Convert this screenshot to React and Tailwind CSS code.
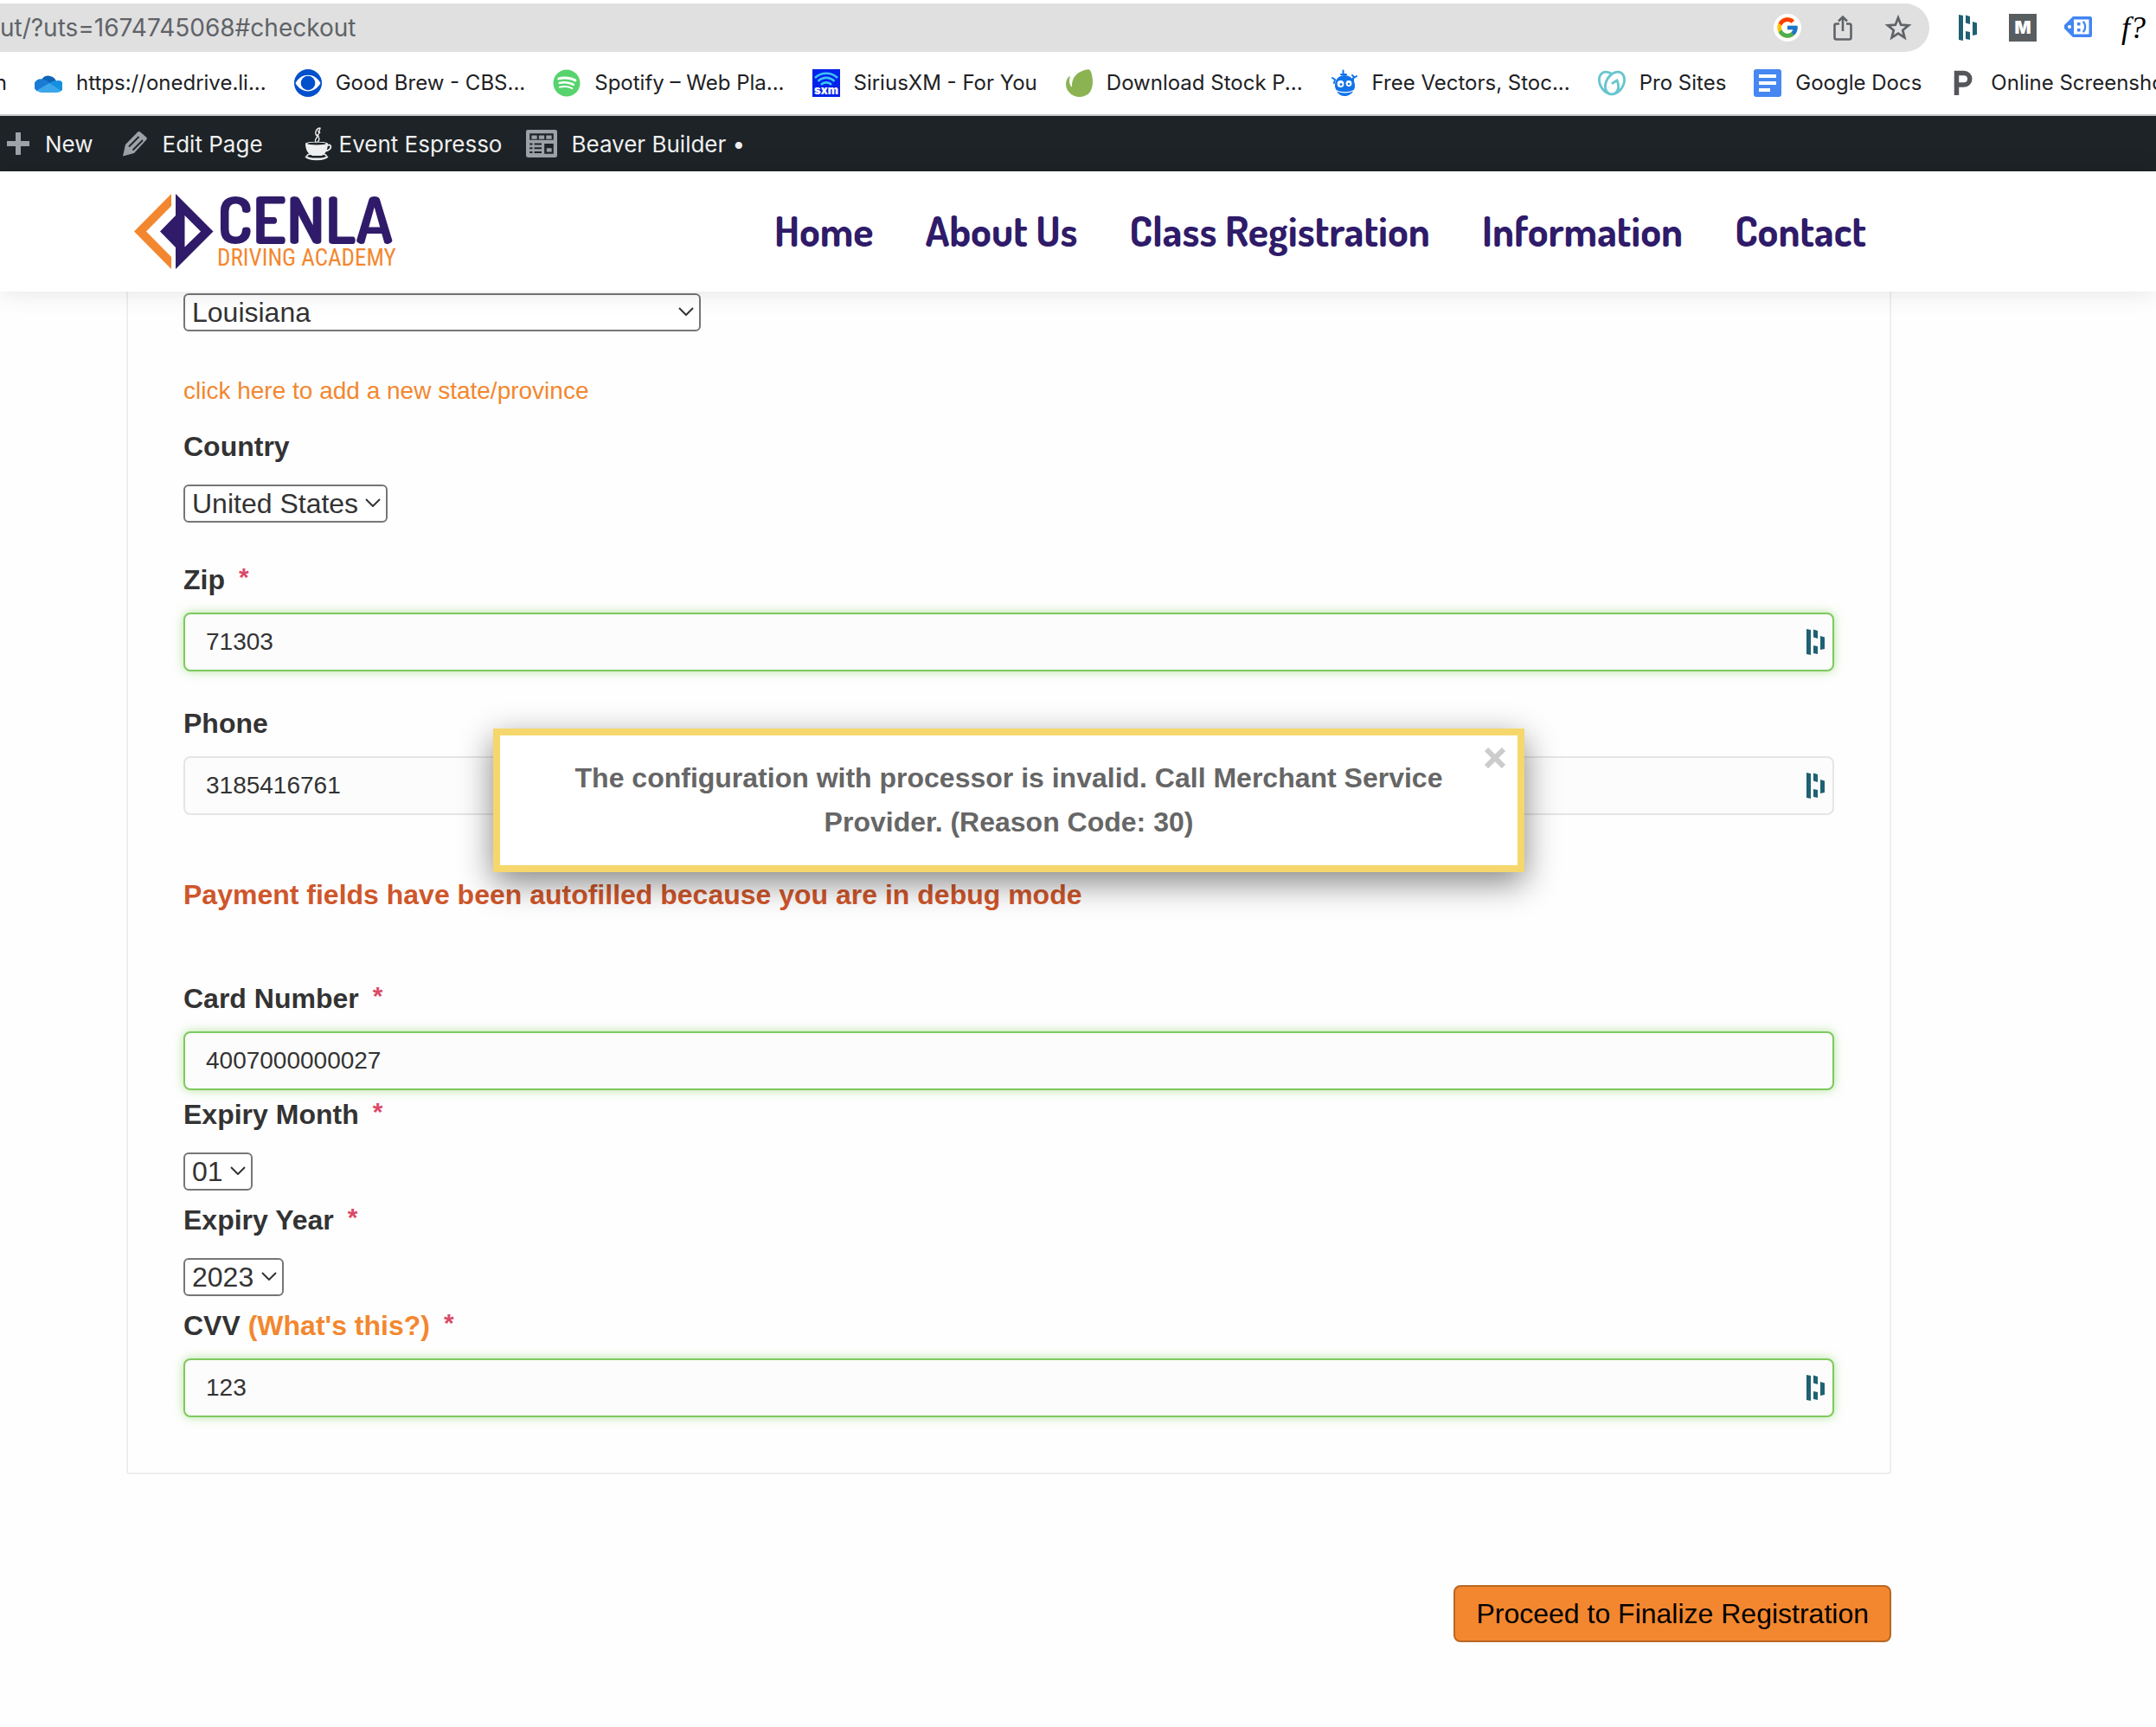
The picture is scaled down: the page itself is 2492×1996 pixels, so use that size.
import { useState } from 'react';
import { FaSpotify } from 'react-icons/fa';
import { FcGoogle } from 'react-icons/fc';
import { SiGodaddy } from 'react-icons/si';

const OneDriveIcon = () => (
  <svg viewBox="0 0 32 32" className="size-8 shrink-0">
    <path d="M8 12a9.5 9.5 0 0 1 17 2l-8 6-9-8z" fill="#0f64b8" />
    <path d="M8.500 11.500c3 0 5 1 9 4.500L3 25.500A7.600 7.600 0 0 1 8.500 11.500z" fill="#1b7bd4" />
    <path d="M24.500 13.500A6.600 6.600 0 0 1 30 25.500L16.500 16.500c2.500-2 5-3 8-3z" fill="#1490df" />
    <path d="M17 16l13.600 9A6.500 6.500 0 0 1 26 27H8a7.600 7.600 0 0 1-5.500-2.500L17 16z" fill="#3ba7ea" />
  </svg>
);

const CbsIcon = () => (
  <svg viewBox="0 0 32 32" className="size-8 shrink-0">
    <circle cx="16" cy="16" r="16" fill="#0350cc" />
    <path d="M1.500 16C8 3.500 24 3.500 30.500 16 24 28.500 8 28.500 1.500 16z" fill="#fff" />
    <circle cx="16" cy="16" r="8.300" fill="#0350cc" />
  </svg>
);

const SxmIcon = () => (
  <svg viewBox="0 0 32 32" className="size-8 shrink-0">
    <rect width="32" height="32" fill="#0122ea" />
    <g fill="none" stroke="#3dc3f5" strokeWidth="2.600">
      <path d="M3 10C10 3 22 3 29 10" />
      <path d="M6.500 14C12 8.500 20 8.500 25.500 14" />
      <path d="M10 18C13 14.500 19 14.500 22 18" />
    </g>
    <text x="16" y="29" textAnchor="middle" fontSize="13" fontWeight="900" fontFamily="Inter, sans-serif" fill="#fff">sxm</text>
  </svg>
);

const LeafIcon = () => (
  <svg viewBox="0 0 32 32" className="size-8 shrink-0">
    <path d="M26.500.3C28.500-.3 30 2 31 6c2 9 1 17-3 21.500-6 6-17 6-23-.5C-.5 21 0 13 4.500 8.500c.8-.7 1.500-.3 1.200.6C4.500 13 5 17 7 20c.5.500 1 .2 1-.500C7.500 9 15 2 26.500.3z" fill="#8cb352" />
  </svg>
);

const RobotIcon = () => (
  <svg viewBox="0 0 32 32" className="size-8 shrink-0">
    <g fill="none" stroke="#1273eb" strokeWidth="2" strokeLinecap="round">
      <path d="M14.500 1.500V5M12 6h6M2 10l3 2-1 4M30 8l-4 2.500V14M27 9l-2-2" />
    </g>
    <path d="M16 7c7 0 12 5 12 12 0 2-.5 4-1.500 5-6 3-14 3-20 0C5.500 22 5 21 5 19 5 12 9 7 16 7z" fill="#1273eb" />
    <path d="M7 25.500c6 2.500 13 2.500 19 0-2 3.500-6 5.500-10 5.500s-7-2-9-5.500z" fill="#1273eb" />
    <circle cx="11.500" cy="17" r="3.900" fill="#fff" />
    <circle cx="21" cy="16.500" r="3.400" fill="#fff" />
    <circle cx="12" cy="17.500" r="1.500" fill="#1273eb" />
    <circle cx="21" cy="17" r="1.300" fill="#1273eb" />
  </svg>
);

const DocsIcon = () => (
  <svg viewBox="0 0 32 32" className="size-8 shrink-0">
    <rect width="32" height="32" rx="3" fill="#4687f1" />
    <path d="M6 6h20v4H6zM6 14h20v4H6zM6 22h13v4H6z" fill="#fff" />
  </svg>
);

const PIcon = () => (
  <svg viewBox="0 0 32 32" className="size-8 shrink-0">
    <path d="M8.500 30V4.500H17a6.500 6.500 0 0 1 0 13.500H8.500" fill="none" stroke="#55565a" strokeWidth="5.500" />
  </svg>
);

const DashlaneIcon = () => (
  <svg viewBox="0 0 32 32" className="size-8 shrink-0" fill="#1f6073">
    <path d="M6 1l5 1v29l-5-1zM14 1.500l5 1.500v9l-5-1.500zM14 20l5 1v9l-5-1zM22 9l5 1.500V24l-5 1z" />
  </svg>
);

const ShareIcon = () => (
  <svg viewBox="0 0 32 32" className="size-8 shrink-0" fill="none" stroke="#5f6368" strokeWidth="2.600">
    <path d="M12 11.500H8.500a2 2 0 0 0-2 2V27.500a2 2 0 0 0 2 2h15a2 2 0 0 0 2-2v-14a2 2 0 0 0-2-2H20" />
    <path d="M16 20V4M11 8.500l5-5 5 5" />
  </svg>
);

const StarIcon = () => (
  <svg viewBox="0 0 32 32" className="size-8 shrink-0" fill="none" stroke="#5f6368" strokeWidth="2.700">
    <path d="M16 4.500l3.200 8.200 8.800.6-6.800 5.600 2.200 8.600-7.400-4.800-7.400 4.800 2.200-8.600L4 13.300l8.800-.6z" />
  </svg>
);

const TagIcon = () => (
  <svg viewBox="0 0 32 32" className="size-8 shrink-0">
    <path d="M10 3h20a2 2 0 0 1 2 2v20a2 2 0 0 1-2 2H10L1 18a4 4 0 0 1 0-6z" fill="#4285f4" />
    <path d="M11 6.500h17.500v17H11z" fill="#fff" />
    <circle cx="6" cy="15" r="2" fill="#fff" />
    <path d="M15 10h3.500v3.500H15zM15 17h3.500v3.500H15z" fill="#4285f4" />
    <path d="M21.500 9c3.500 2 3.500 10 0 12" fill="none" stroke="#4285f4" strokeWidth="2.200" />
  </svg>
);

const PencilIcon = () => (
  <svg viewBox="0 0 32 32" className="size-8 shrink-0" fill="#9ca2a7">
    <path d="M22 2.500l7 6c1 1 1 2 .2 3L15 27 2 30.500 5 17 18.500 3.200c1-1 2.500-1.500 3.500-.7z" />
    <path d="M9 19.500L20.500 8M13.500 23.500L25 12" stroke="#1d2327" strokeWidth="1.800" />
  </svg>
);

const CupIcon = () => (
  <svg viewBox="0 0 32 40" className="h-10 w-8 shrink-0">
    <path d="M1 20c0-3 26-3 26 0 0 7-3 12-7 14H9C4 32 1 27 1 20z" fill="#f0f0f1" />
    <ellipse cx="14" cy="20" rx="11" ry="1.500" fill="#1d2327" />
    <path d="M26.500 22c5-2.500 6 5-2 6.500" fill="none" stroke="#f0f0f1" strokeWidth="1.800" />
    <path d="M1.500 34.500c2 4.500 23 4.500 25 0" fill="none" stroke="#f0f0f1" strokeWidth="2.600" />
    <path d="M2.500 34c1-1.500 3-2 5-2M25.500 34c-1-1.500-3-2-5-2" fill="none" stroke="#f0f0f1" strokeWidth="1.500" />
    <path d="M14 19c-5-4 3-6 1-10M15 18c5-4-1-6 1-9 2-3-1-4-1-4M14 11c-3-4 0-9 4-9 1 1-3 3 0 6" fill="none" stroke="#f0f0f1" strokeWidth="1.300" />
  </svg>
);

const GridIcon = () => (
  <svg viewBox="0 0 34 30" className="h-8 w-9 shrink-0">
    <rect width="34" height="30" rx="2" fill="#9ca2a7" />
    <g fill="#1d2327">
      <path d="M4 4h26v7H4zM4 14.500h3v2H4zM9 14.500h8v2H9zM4 19h3v2H4zM9 19h8v2H9zM4 23.500h3v2H4zM9 23.500h8v2H9zM20 15h10v11H20z" />
    </g>
    <path d="M6 6h6v4H6zM14 6h6v4h-6zM22 6h6v4h-6zM22.500 20h5.500v4h-5.500z" fill="#9ca2a7" />
  </svg>
);

const bookmarks = [
  { name: 'https://onedrive.li...', icon: <OneDriveIcon /> },
  { name: 'Good Brew - CBS...', icon: <CbsIcon /> },
  { name: 'Spotify – Web Pla...', icon: <FaSpotify className="size-8 shrink-0 text-[#57d36e]" /> },
  { name: 'SiriusXM - For You', icon: <SxmIcon /> },
  { name: 'Download Stock P...', icon: <LeafIcon /> },
  { name: 'Free Vectors, Stoc...', icon: <RobotIcon /> },
  { name: 'Pro Sites', icon: <SiGodaddy className="size-8 shrink-0 text-[#67c5cd]" /> },
  { name: 'Google Docs', icon: <DocsIcon /> },
  { name: 'Online Screenshot', icon: <PIcon /> },
];

const navLinks = ['Home', 'About Us', 'Class Registration', 'Information', 'Contact'];

const Label = ({ htmlFor, required, children }) => (
  <label htmlFor={htmlFor} className="block text-[32px] leading-[48px] font-bold">
    {children}
    {required && <span className="ml-4 align-[4px] text-[30px] leading-none text-[#dc4a68]">*</span>}
  </label>
);

const TextField = ({ id, value, onChange, valid, dashlane }) => (
  <div className="relative">
    <input
      id={id}
      type="text"
      value={value}
      onChange={onChange}
      className={`block h-[68px] w-full rounded-lg border-2 bg-[#fcfcfc] px-6 text-[28px] outline-none ${
        valid ? 'border-[#7fc95e] shadow-[0_0_12px_rgba(120,205,80,0.55)]' : 'border-[#e5e5e5]'
      }`}
    />
    {dashlane && (
      <span className="absolute inset-y-0 right-[6px] flex items-center">
        <DashlaneIcon />
      </span>
    )}
  </div>
);

const SelectField = ({ id, label, value, onChange, options, width }) => (
  <div className={`relative ${width}`}>
    <select
      id={id}
      aria-label={label}
      value={value}
      onChange={onChange}
      className="block h-11 w-full appearance-none rounded-md border-2 border-[#767676] bg-white pl-2 text-[32px] leading-10"
    >
      {options.map((o) => <option key={o} value={o}>{o}</option>)}
    </select>
    <svg viewBox="0 0 18 10" className="pointer-events-none absolute top-4 right-2 h-[10px] w-[18px]" fill="none" stroke="#333" strokeWidth="2">
      <path d="M1 1l8 8 8-8" />
    </svg>
  </div>
);

export default function App() {
  const [showNotice, setShowNotice] = useState(true);
  const [formData, setFormData] = useState({
    state: 'Louisiana', country: 'United States', zip: '71303', phone: '3185416761',
    card: '4007000000027', month: '01', year: '2023', cvv: '123'
  });

  const update = (key) => (e) => setFormData({ ...formData, [key]: e.target.value });

  return (
    <div className="overflow-x-hidden bg-[#fefefe] font-['Liberation_Sans',Arial,sans-serif] text-[#333]">
      {/* Browser toolbar */}
      <div className="bg-white font-[Inter,sans-serif] text-[#202124]">
        <div className="flex items-center pt-1 pr-[10px]">
          <div className="flex h-14 flex-1 items-center gap-8 rounded-r-full bg-[#e0e0e0] pr-5">
            <span className="flex-1 text-[28px] text-[#5f6368]">ut/?uts=1674745068#checkout</span>
            <button aria-label="Google" className="flex size-8 items-center justify-center rounded-full bg-white">
              <FcGoogle className="size-7" />
            </button>
            <button aria-label="Share"><ShareIcon /></button>
            <button aria-label="Bookmark"><StarIcon /></button>
          </div>
          <div className="ml-7 flex items-center gap-8">
            <button aria-label="Dashlane"><DashlaneIcon /></button>
            <button className="flex size-8 items-center justify-center bg-[#585d60] text-xl font-black text-white">M</button>
            <button aria-label="Tag"><TagIcon /></button>
            <button className="w-8 font-['Liberation_Serif',serif] text-4xl leading-8 whitespace-nowrap text-black italic">f?</button>
          </div>
        </div>
        <div className="flex h-[74px] items-center gap-8 overflow-hidden border-b-2 border-[#c9cccb] text-2xl whitespace-nowrap">
          <span className="flex w-2 shrink-0 justify-end">n</span>
          {bookmarks.map((b) => (
            <a key={b.name} href="#" className="flex shrink-0 items-center gap-4">
              {b.icon}
              {b.name}
            </a>
          ))}
        </div>
      </div>

      {/* Admin bar */}
      <div className="flex h-16 items-center bg-[#1d2327] font-[Inter,sans-serif] text-[26px] text-[#f0f0f1]">
        <a href="#" className="flex items-center gap-4 pl-1">
          <svg viewBox="0 0 32 32" className="size-8" stroke="#9ca2a7" strokeWidth="6">
            <path d="M17 3v26M4 16h26" />
          </svg>
          New
        </a>
        <a href="#" className="ml-8 flex items-center gap-4"><PencilIcon />Edit Page</a>
        <a href="#" className="ml-12 flex items-center gap-2"><CupIcon />Event Espresso</a>
        <a href="#" className="ml-7 flex items-center gap-4"><GridIcon />Beaver Builder •</a>
      </div>

      {/* Site header */}
      <header className="relative z-10 flex h-[139px] items-center justify-between bg-white pr-[335px] pl-[155px] shadow-[0_0_28px_rgba(0,0,0,0.11)]">
        <a href="#" className="flex items-center gap-1">
          <svg viewBox="0 0 92 87" className="h-[87px] w-[92px]">
            <path d="M43 0v14L14 43.500 43 73v14L0 43.500z" fill="#f3872f" />
            <path fillRule="evenodd" d="M48 0l43.500 43.500L48 87V62L30 43.500 48 25zM58.500 25v36.500L77 43.500z" fill="#2f1b69" />
          </svg>
          <span className="flex flex-col">
            <span className="font-[Dosis,sans-serif] text-[74px] leading-[60px] font-bold text-[#2f1b69]">CENLA</span>
            <span className="font-['Roboto_Condensed',sans-serif] text-[27px] leading-[30px] text-[#f3872f]">DRIVING ACADEMY</span>
          </span>
        </a>
        <nav className="flex gap-[60px] pb-1 font-[Dosis,sans-serif] text-5xl font-bold text-[#2f1b69]">
          {navLinks.map((l) => <a key={l} href="#">{l}</a>)}
        </nav>
      </header>

      {/* Checkout form */}
      <main className="relative pr-[306px] pb-[98px] pl-[146px]">
        <form onSubmit={(e) => e.preventDefault()}>
          <div className="rounded-b border-2 border-t-0 border-[#eee] px-16 pt-[2px] pb-16">
            <SelectField label="State/Province" value={formData.state} onChange={update('state')} options={['Louisiana']} width="w-[598px]" />
            <a href="#" className="mt-[49px] mb-5 block text-[28px] leading-10 text-[#f3872f]">click here to add a new state/province</a>

            <Label htmlFor="country">Country</Label>
            <div className="mt-5 mb-[42px]">
              <SelectField id="country" value={formData.country} onChange={update('country')} options={['United States']} width="w-[236px]" />
            </div>

            <Label htmlFor="zip" required>Zip</Label>
            <div className="mt-[14px] mb-9">
              <TextField id="zip" value={formData.zip} onChange={update('zip')} valid dashlane />
            </div>

            <Label htmlFor="phone">Phone</Label>
            <div className="mt-[14px]">
              <TextField id="phone" value={formData.phone} onChange={update('phone')} dashlane />
            </div>

            <p className="mt-[68px] mb-[72px] text-[32px] leading-[48px] font-bold text-[#cf562b]">
              Payment fields have been autofilled because you are in debug mode
            </p>

            <Label htmlFor="card" required>Card Number</Label>
            <div className="mt-[14px] mb-1">
              <TextField id="card" value={formData.card} onChange={update('card')} valid />
            </div>

            <Label htmlFor="month" required>Expiry Month</Label>
            <div className="mt-5 mb-[10px]">
              <SelectField id="month" value={formData.month} onChange={update('month')} options={['01', '02', '03', '04']} width="w-20" />
            </div>

            <Label htmlFor="year" required>Expiry Year</Label>
            <div className="mt-5 mb-[10px]">
              <SelectField id="year" value={formData.year} onChange={update('year')} options={['2023', '2024', '2025']} width="w-[116px]" />
            </div>

            <Label htmlFor="cvv" required>
              CVV <a href="#" className="text-[#f3872f]">(What's this?)</a>
            </Label>
            <div className="mt-[14px]">
              <TextField id="cvv" value={formData.cvv} onChange={update('cvv')} valid dashlane />
            </div>
          </div>

          <div className="mt-32 flex justify-end">
            <button type="submit" className="h-[66px] rounded-lg border-2 border-[#b96723] bg-[#f3872f] px-6 text-[32px] text-black">
              Proceed to Finalize Registration
            </button>
          </div>
        </form>

        {/* Error notice */}
        {showNotice && (
          <div className="absolute inset-x-0 top-[505px] flex justify-center pr-[306px] pl-[146px]">
            <div role="alert" className="relative w-[1192px] border-8 border-[#f5d76b] bg-white px-20 py-6 text-center text-[32px] leading-[51px] font-bold text-[#666] shadow-[0_12px_36px_rgba(0,0,0,0.48)]">
              The configuration with processor is invalid. Call Merchant Service Provider. (Reason Code: 30)
              <button aria-label="Close" onClick={() => setShowNotice(false)} className="absolute top-[14px] right-[14px]">
                <svg viewBox="0 0 24 24" className="size-6" stroke="#ccc" strokeWidth="6">
                  <path d="M2 2l20 20M22 2L2 22" />
                </svg>
              </button>
            </div>
          </div>
        )}
      </main>
    </div>
  );
}
